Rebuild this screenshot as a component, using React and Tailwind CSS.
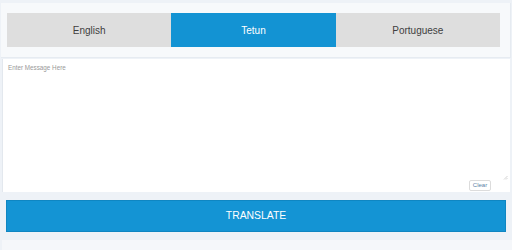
import React, { useState } from 'react';

const languages = ['English', 'Tetun', 'Portuguese'];

export default function App() {
  const [active, setActive] = useState('Tetun');
  const [message, setMessage] = useState('');

  return (
    <div
      className="w-[512px] h-[250px] overflow-hidden bg-[#eef2f7] pt-[3px]"
      style={{ fontFamily: '"Liberation Sans", Arial, sans-serif' }}
    >
      {/* Language tabs */}
      <div className="ml-[1px] mr-[1px] bg-[#f7f9fb] border-r border-b border-[#e6ebf1] pl-[6px] pr-[10px] pt-[10px] pb-[10px]">
        <div className="grid grid-cols-3 h-[34px]">
          {languages.map((lang) => (
            <button
              key={lang}
              onClick={() => setActive(lang)}
              className={
                active === lang
                  ? 'flex items-center justify-center bg-[#1393d3] text-white text-[10px]'
                  : 'flex items-center justify-center bg-[#dedede] text-[#3f3f3f] text-[10px]'
              }
            >
              {lang}
            </button>
          ))}
        </div>
      </div>

      {/* Message box */}
      <div className="relative mt-[1px] ml-[2px] mr-[2px] h-[133px] bg-white border-l border-[#e3e8ee]">
        <textarea
          value={message}
          onChange={(e) => setMessage(e.target.value)}
          placeholder="Enter Message Here"
          className="w-full h-full resize-none outline-none px-[5px] pt-[4px] text-[6.3px] text-[#555] placeholder:text-[#999] bg-transparent"
        />
        <button
          onClick={() => setMessage('')}
          className="absolute left-[466px] top-[121px] w-[22px] h-[11px] rounded-[2px] border border-[#dcdcdc] bg-white text-[6px] text-[#5a7fa6] flex items-center justify-center"
        >
          Clear
        </button>
        <svg className="absolute left-[500px] top-[116px]" width="5" height="5" viewBox="0 0 5 5">
          <path d="M4.5 1 L1 4.5 M4.5 3 L3 4.5" stroke="#b5b5b5" strokeWidth="0.6" fill="none" />
        </svg>
      </div>

      {/* Translate */}
      <div className="pl-[6px] pr-[6px] pt-[8px]">
        <button className="w-[500px] h-[32px] bg-[#1494d4] border border-[#0f86c2] text-white text-[10.4px] flex items-center justify-center">
          TRANSLATE
        </button>
      </div>
      <div className="mt-[8px] ml-[2px] h-[20px] bg-[#f5f7fa]" />
    </div>
  );
}
